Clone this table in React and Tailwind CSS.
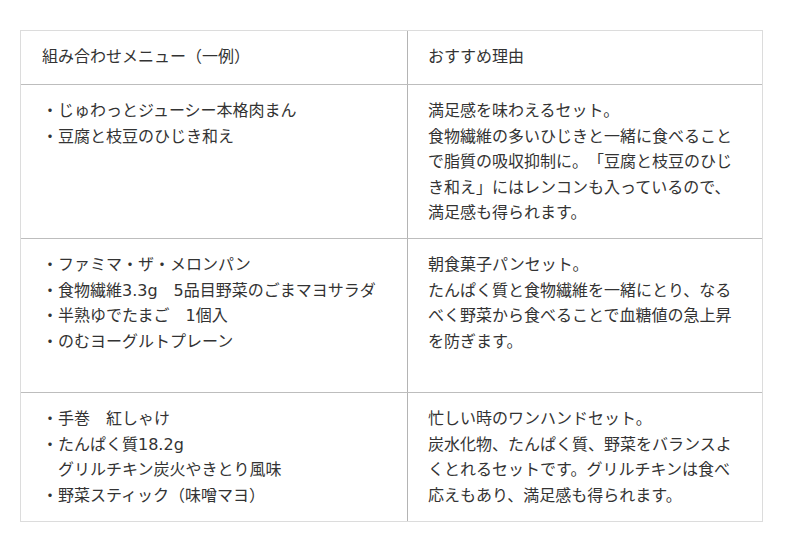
import React from "react";

const rows = [
  {
    h: "h-[154px]",
    left: ["・じゅわっとジューシー本格肉まん", "・豆腐と枝豆のひじき和え"],
    right: [
      "満足感を味わえるセット。",
      "食物繊維の多いひじきと一緒に食べること",
      "で脂質の吸収抑制に。「豆腐と枝豆のひじ",
      "き和え」にはレンコンも入っているので、",
      "満足感も得られます。",
    ],
  },
  {
    h: "h-[154px]",
    left: [
      "・ファミマ・ザ・メロンパン",
      "・食物繊維3.3g　5品目野菜のごまマヨサラダ",
      "・半熟ゆでたまご　1個入",
      "・のむヨーグルトプレーン",
    ],
    right: [
      "朝食菓子パンセット。",
      "たんぱく質と食物繊維を一緒にとり、なる",
      "べく野菜から食べることで血糖値の急上昇",
      "を防ぎます。",
    ],
  },
  {
    h: "h-[128px]",
    left: [
      "・手巻　紅しゃけ",
      "・たんぱく質18.2g",
      "　グリルチキン炭火やきとり風味",
      "・野菜スティック（味噌マヨ）",
    ],
    right: [
      "忙しい時のワンハンドセット。",
      "炭水化物、たんぱく質、野菜をバランスよ",
      "くとれるセットです。グリルチキンは食べ",
      "応えもあり、満足感も得られます。",
    ],
  },
];

function Lines({ lines }) {
  return (
    <div>
      {lines.map((l, i) => (
        <div key={i} className="whitespace-nowrap">
          {l}
        </div>
      ))}
    </div>
  );
}

export default function App() {
  return (
    <div
      className="w-[800px] h-[552px] bg-white pt-[30px] pl-[20px] text-[16px] leading-[25.6px] text-[#333333] [text-spacing-trim:space-all]"
      style={{ fontFamily: '"DejaVu Sans", "Noto Sans CJK JP", sans-serif' }}
    >
      <div className="w-[743px] border border-[#dcdcdc]">
        <div className="grid grid-cols-[387px_1fr] h-[54px] border-b border-[#bdbdbd]">
          <div className="border-r border-[#b4b4b4] px-[21px] pt-[13px]">
            組み合わせメニュー（一例）
          </div>
          <div className="px-[20px] pt-[13px]">おすすめ理由</div>
        </div>
        {rows.map((r, i) => (
          <div
            key={i}
            className={`grid grid-cols-[387px_1fr] ${r.h} ${
              i < rows.length - 1 ? "border-b border-[#bdbdbd]" : ""
            }`}
          >
            <div className="border-r border-[#b4b4b4] px-[21px] pt-[13px]">
              <Lines lines={r.left} />
            </div>
            <div className="px-[20px] pt-[13px]">
              <Lines lines={r.right} />
            </div>
          </div>
        ))}
      </div>
    </div>
  );
}
